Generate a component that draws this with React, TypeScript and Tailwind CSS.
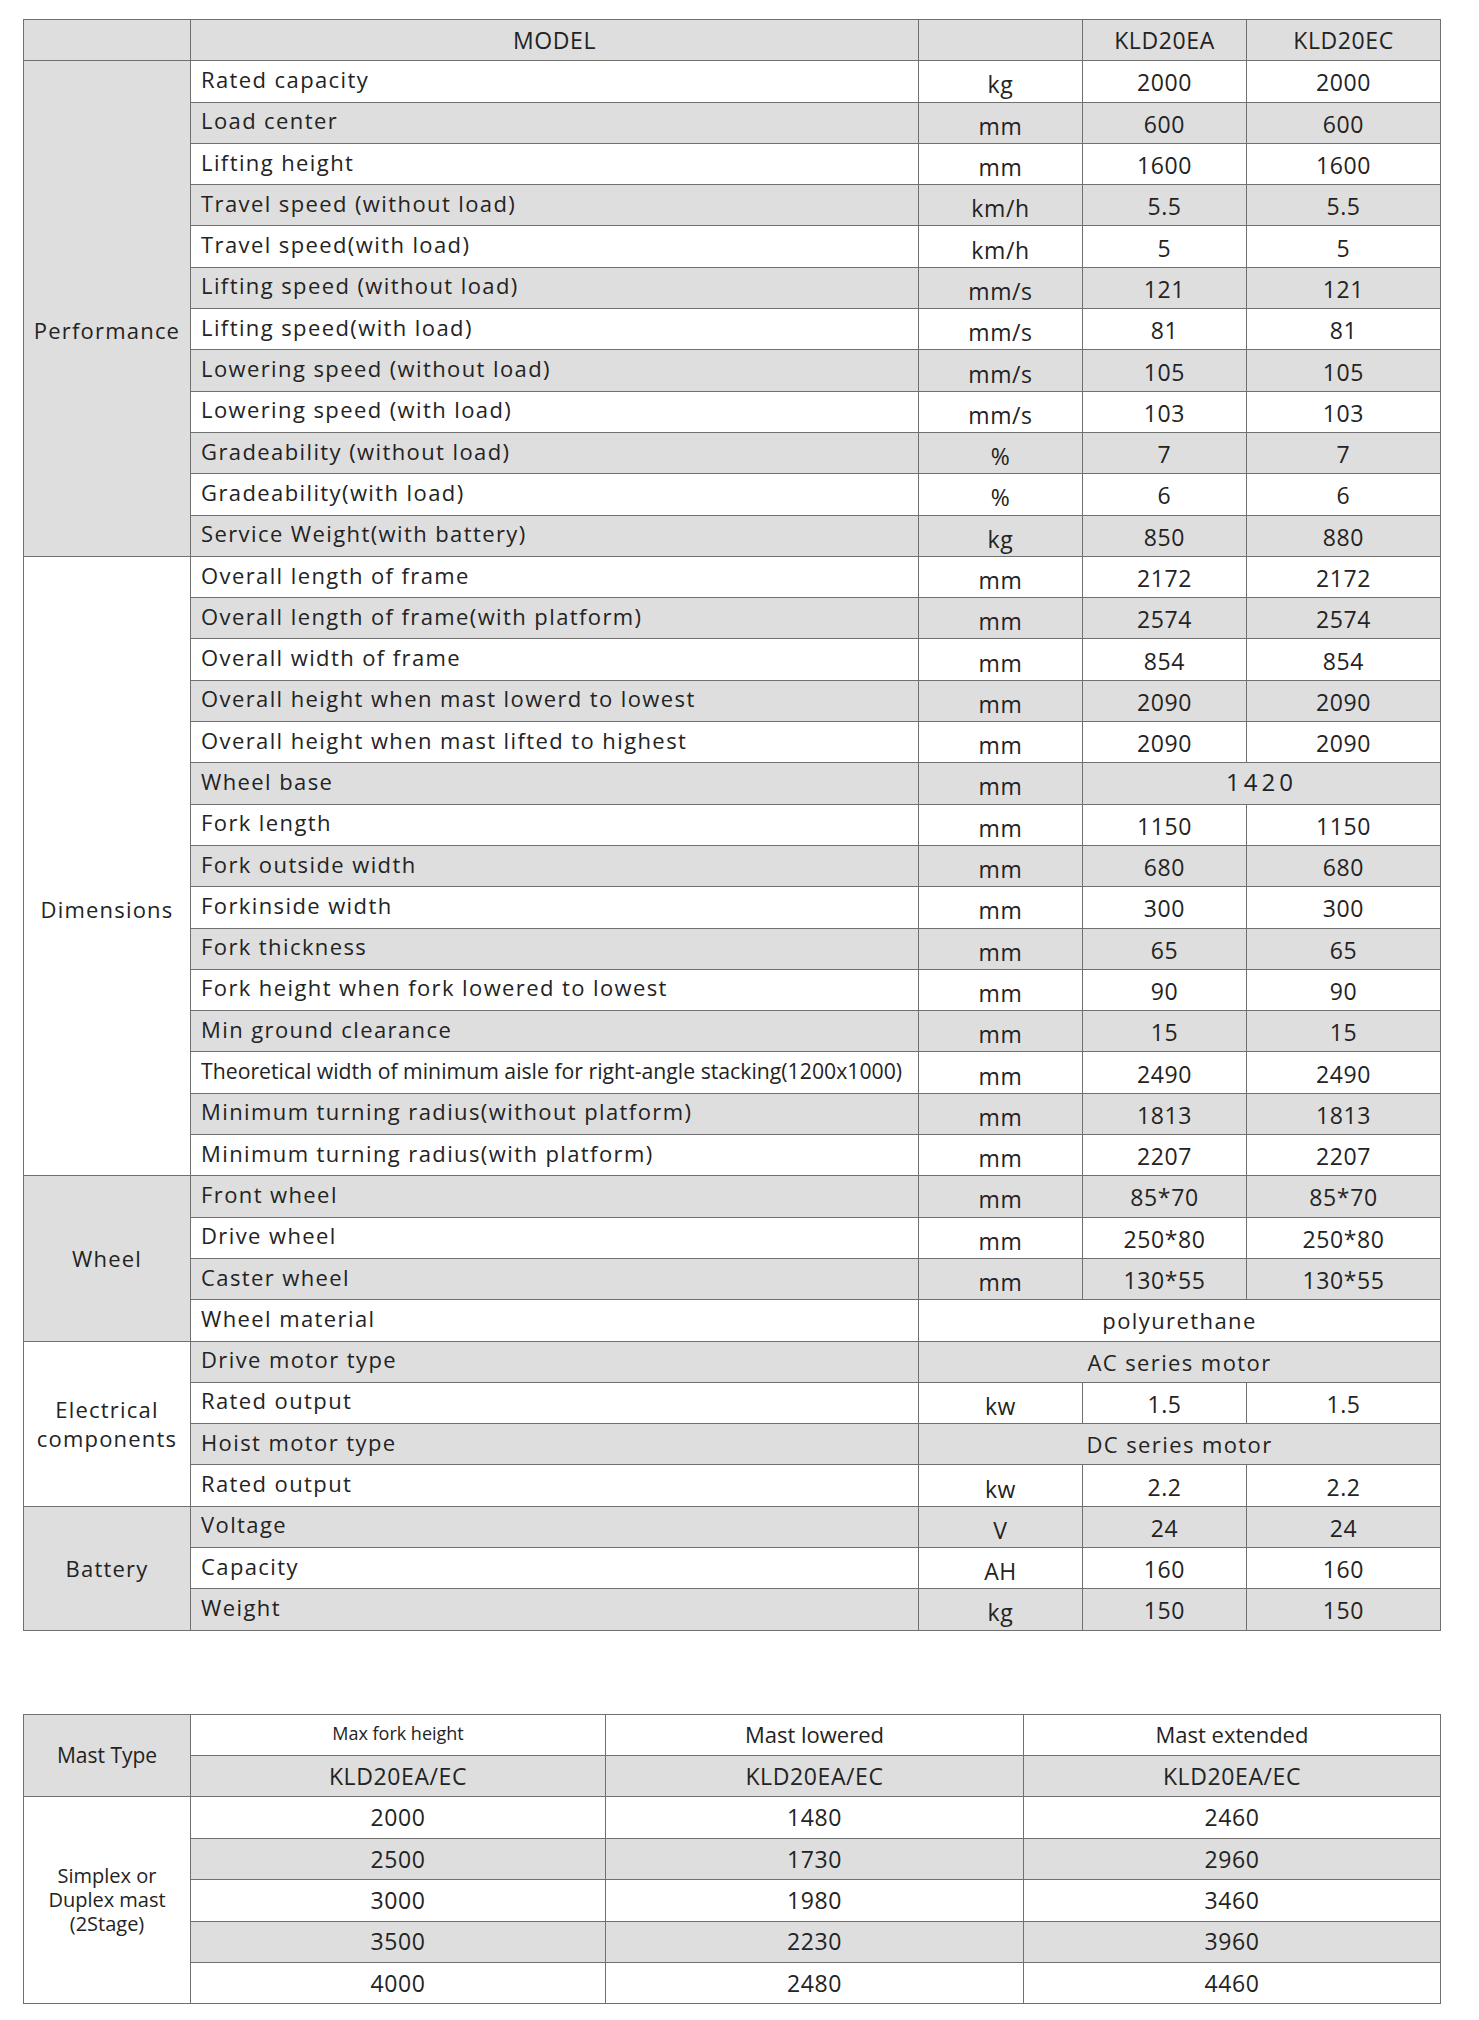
import React from "react"

type Row = {
  label: string
  unit?: string
  a?: string
  b?: string
  wide?: string // spans both model columns
  full?: string // spans unit + both model columns
  narrow?: boolean
}

type Group = {
  name: string[]
  pad: string
  rows: Row[]
}

const groups: Group[] = [
  {
    name: ["Performance"],
    pad: "pt-[44px]",
    rows: [
      { label: "Rated capacity", unit: "kg", a: "2000", b: "2000" },
      { label: "Load center", unit: "mm", a: "600", b: "600" },
      { label: "Lifting height", unit: "mm", a: "1600", b: "1600" },
      { label: "Travel speed (without load)", unit: "km/h", a: "5.5", b: "5.5" },
      { label: "Travel speed(with load)", unit: "km/h", a: "5", b: "5" },
      { label: "Lifting speed (without load)", unit: "mm/s", a: "121", b: "121" },
      { label: "Lifting speed(with load)", unit: "mm/s", a: "81", b: "81" },
      { label: "Lowering speed (without load)", unit: "mm/s", a: "105", b: "105" },
      { label: "Lowering speed (with load)", unit: "mm/s", a: "103", b: "103" },
      { label: "Gradeability (without load)", unit: "%", a: "7", b: "7" },
      { label: "Gradeability(with load)", unit: "%", a: "6", b: "6" },
      { label: "Service Weight(with battery)", unit: "kg", a: "850", b: "880" },
    ],
  },
  {
    name: ["Dimensions"],
    pad: "pt-[86px]",
    rows: [
      { label: "Overall length of frame", unit: "mm", a: "2172", b: "2172" },
      { label: "Overall length of frame(with platform)", unit: "mm", a: "2574", b: "2574" },
      { label: "Overall width of frame", unit: "mm", a: "854", b: "854" },
      { label: "Overall height when mast lowerd to lowest", unit: "mm", a: "2090", b: "2090" },
      { label: "Overall height when mast lifted to highest", unit: "mm", a: "2090", b: "2090" },
      { label: "Wheel base", unit: "mm", wide: "1420" },
      { label: "Fork length", unit: "mm", a: "1150", b: "1150" },
      { label: "Fork outside width", unit: "mm", a: "680", b: "680" },
      { label: "Forkinside width", unit: "mm", a: "300", b: "300" },
      { label: "Fork thickness", unit: "mm", a: "65", b: "65" },
      { label: "Fork height when fork lowered to lowest", unit: "mm", a: "90", b: "90" },
      { label: "Min ground clearance", unit: "mm", a: "15", b: "15" },
      {
        label: "Theoretical width of minimum aisle for right-angle stacking(1200x1000)",
        unit: "mm",
        a: "2490",
        b: "2490",
        narrow: true,
      },
      { label: "Minimum turning radius(without platform)", unit: "mm", a: "1813", b: "1813" },
      { label: "Minimum turning radius(with platform)", unit: "mm", a: "2207", b: "2207" },
    ],
  },
  {
    name: ["Wheel"],
    pad: "",
    rows: [
      { label: "Front wheel", unit: "mm", a: "85*70", b: "85*70" },
      { label: "Drive wheel", unit: "mm", a: "250*80", b: "250*80" },
      { label: "Caster wheel", unit: "mm", a: "130*55", b: "130*55" },
      { label: "Wheel material", full: "polyurethane" },
    ],
  },
  {
    name: ["Electrical", "components"],
    pad: "",
    rows: [
      { label: "Drive motor type", full: "AC series motor" },
      { label: "Rated output", unit: "kw", a: "1.5", b: "1.5" },
      { label: "Hoist motor type", full: "DC series motor" },
      { label: "Rated output", unit: "kw", a: "2.2", b: "2.2" },
    ],
  },
  {
    name: ["Battery"],
    pad: "",
    rows: [
      { label: "Voltage", unit: "V", a: "24", b: "24" },
      { label: "Capacity", unit: "AH", a: "160", b: "160" },
      { label: "Weight", unit: "kg", a: "150", b: "150" },
    ],
  },
]

const mastRows = [
  ["2000", "1480", "2460"],
  ["2500", "1730", "2960"],
  ["3000", "1980", "3460"],
  ["3500", "2230", "3960"],
  ["4000", "2480", "4460"],
]

function SpecTable() {
  let index = 0
  return (
    <table className="w-[1417px] table-fixed border-collapse">
      <colgroup>
        <col className="w-[167px]" />
        <col className="w-[728px]" />
        <col className="w-[164px]" />
        <col className="w-[164px]" />
        <col className="w-[194px]" />
      </colgroup>
      <tbody>
        {/* Header */}
        <tr className="h-[41.3px] bg-[#dedede]">
          <td className="border border-[#707070] p-0" />
          <td className="border border-[#707070] p-0 text-center text-[23px] tracking-[0.6px]">MODEL</td>
          <td className="border border-[#707070] p-0" />
          <td className="border border-[#707070] p-0 text-center text-[23px] tracking-[0.6px]">KLD20EA</td>
          <td className="border border-[#707070] p-0 text-center text-[23px] tracking-[0.6px]">KLD20EC</td>
        </tr>

        {groups.map((group, gi) =>
          group.rows.map((row, ri) => {
            const gray = index % 2 === 1
            index++
            return (
              <tr key={`${gi}-${ri}`} className={`h-[41.3px] ${gray ? "bg-[#dedede]" : "bg-white"}`}>
                {ri === 0 && (
                  <td
                    rowSpan={group.rows.length}
                    className={`border border-[#707070] p-0 text-center align-middle text-[22px] leading-[29px] tracking-[1.2px] ${group.pad} ${
                      gi % 2 === 0 ? "bg-[#dedede]" : "bg-white"
                    }`}
                  >
                    {group.name.map((n) => (
                      <div key={n}>{n}</div>
                    ))}
                  </td>
                )}
                <td className="border border-[#707070] p-0 pb-[5px] pl-[10px] text-left text-[22px] leading-[28px] tracking-[1.4px] whitespace-nowrap">
                  {row.narrow ? (
                    <span className="inline-block origin-left scale-x-[0.965] tracking-normal">{row.label}</span>
                  ) : (
                    row.label
                  )}
                </td>
                {row.full ? (
                  <td colSpan={3} className="border border-[#707070] p-0 text-center text-[22px] leading-[28px] tracking-[1.4px]">
                    {row.full}
                  </td>
                ) : (
                  <>
                    <td className="border border-[#707070] p-0 pt-[6px] text-center text-[23px] leading-[28px] tracking-[0.6px]">
                      {row.unit}
                    </td>
                    {row.wide ? (
                      <td colSpan={2} className="border border-[#707070] p-0 pb-[2px] text-center text-[24px] leading-[28px] tracking-[4px]">
                        {row.wide}
                      </td>
                    ) : (
                      <>
                        <td className="border border-[#707070] p-0 pt-[2px] text-center text-[23px] leading-[28px] tracking-[0.6px]">
                          {row.a}
                        </td>
                        <td className="border border-[#707070] p-0 pt-[2px] text-center text-[23px] leading-[28px] tracking-[0.6px]">
                          {row.b}
                        </td>
                      </>
                    )}
                  </>
                )}
              </tr>
            )
          }),
        )}
      </tbody>
    </table>
  )
}

function MastTable() {
  return (
    <table className="w-[1417px] table-fixed border-collapse">
      <colgroup>
        <col className="w-[167px]" />
        <col className="w-[415px]" />
        <col className="w-[418px]" />
        <col className="w-[417px]" />
      </colgroup>
      <tbody>
        <tr className="h-[41.4px] bg-white">
          <td rowSpan={2} className="border border-[#707070] bg-[#dedede] p-0 text-center text-[21px]">
            Mast Type
          </td>
          <td className="border border-[#707070] p-0 pb-[3px] text-center text-[18px]">Max fork height</td>
          <td className="border border-[#707070] p-0 text-center text-[22px]">Mast lowered</td>
          <td className="border border-[#707070] p-0 text-center text-[22px]">Mast extended</td>
        </tr>
        <tr className="h-[41.4px] bg-[#dedede]">
          <td className="border border-[#707070] p-0 text-center text-[23px] tracking-[0.6px]">KLD20EA/EC</td>
          <td className="border border-[#707070] p-0 text-center text-[23px] tracking-[0.6px]">KLD20EA/EC</td>
          <td className="border border-[#707070] p-0 text-center text-[23px] tracking-[0.6px]">KLD20EA/EC</td>
        </tr>
        {mastRows.map((r, i) => (
          <tr key={r[0]} className={`h-[41.4px] ${i % 2 === 1 ? "bg-[#dedede]" : "bg-white"}`}>
            {i === 0 && (
              <td rowSpan={5} className="border border-[#707070] bg-white p-0 text-center text-[20px] leading-[24px]">
                <div>Simplex or</div>
                <div>Duplex mast</div>
                <div>(2Stage)</div>
              </td>
            )}
            {r.map((v, j) => (
              <td key={j} className="border border-[#707070] p-0 text-center text-[23px] tracking-[0.6px]">
                {v}
              </td>
            ))}
          </tr>
        ))}
      </tbody>
    </table>
  )
}

export default function App() {
  return (
    <div className="min-h-[2020px] w-[1479px] bg-white pl-[23px] pt-[19px] font-['Open_Sans',sans-serif] text-[#232323]">
      <SpecTable />
      <div className="mt-[83px]">
        <MastTable />
      </div>
    </div>
  )
}
